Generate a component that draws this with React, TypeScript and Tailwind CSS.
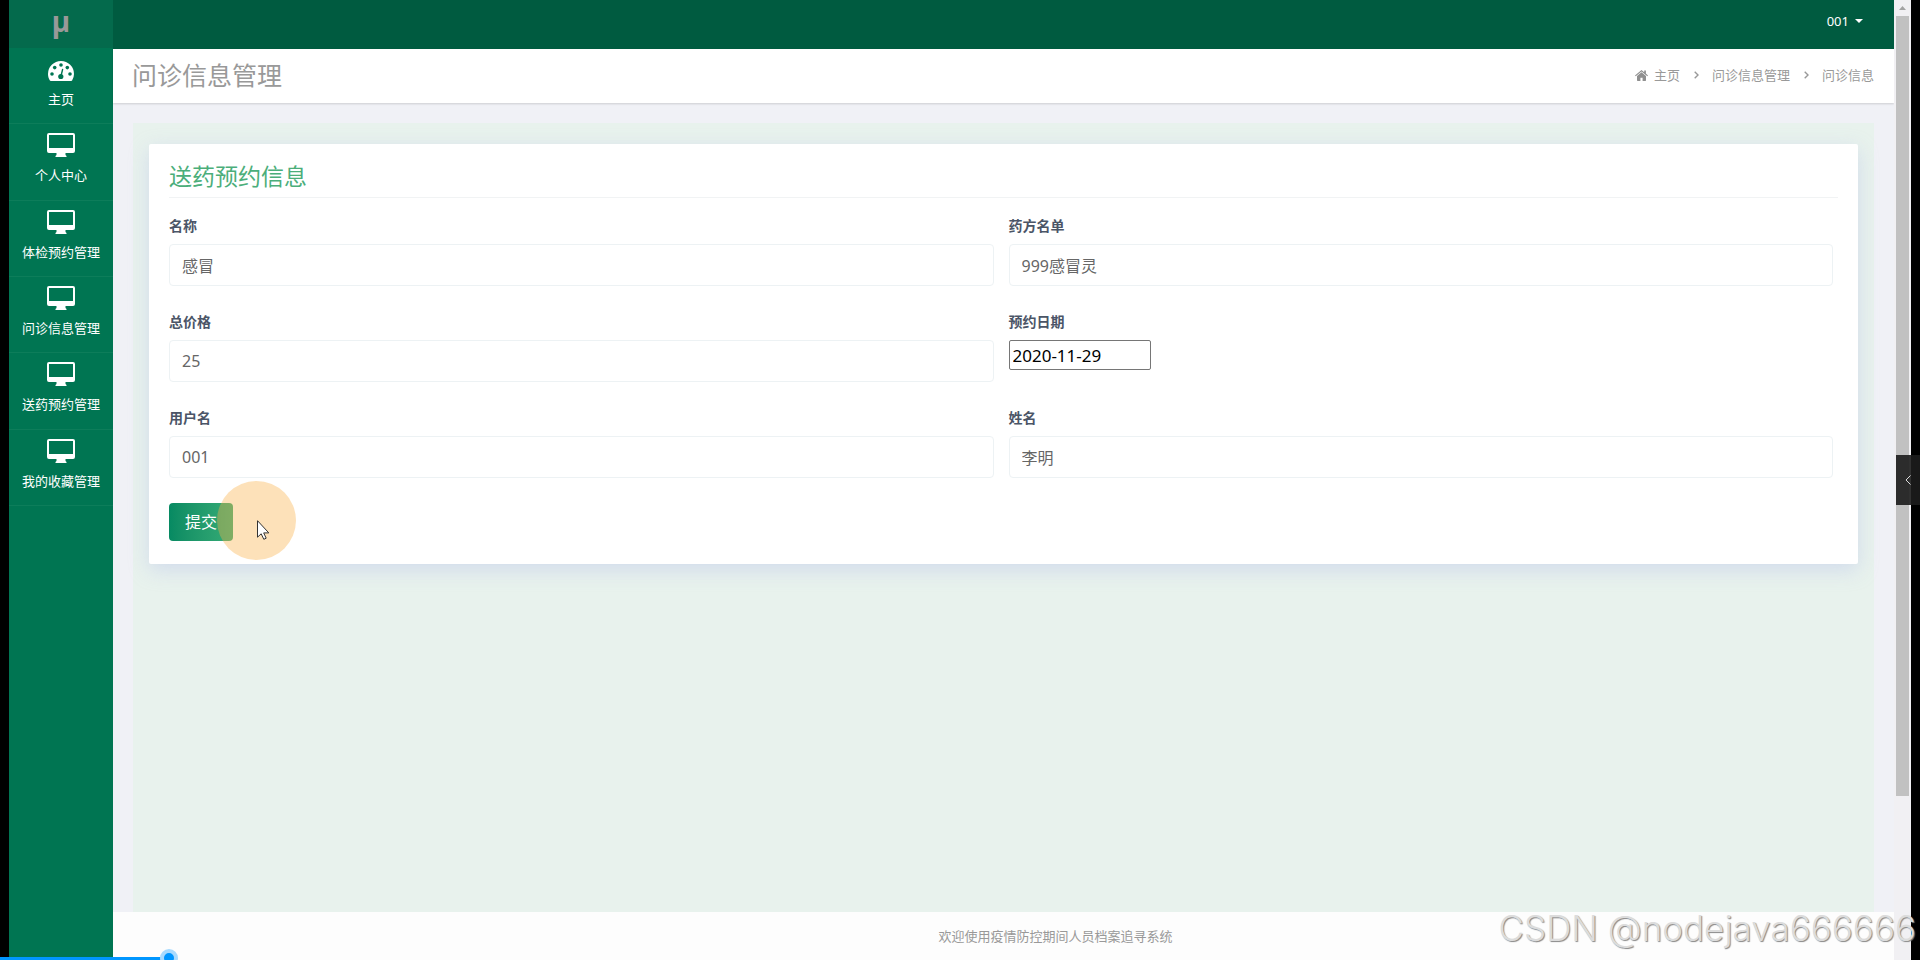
import React from "react";

const menu = ["个人中心", "体检预约管理", "问诊信息管理", "送药预约管理", "我的收藏管理"];

function DashboardIcon() {
  return (
    <svg viewBox="0 0 26 20" className="h-5 w-[26px]" aria-hidden="true">
      <path fill="#fff" d="M13 0A13 13 0 0 0 0 13c0 2.500.7 4.800 1.900 6.500.2.300.5.500.9.500h20.400c.4 0 .7-.2.9-.5A12 12 0 0 0 26 13 13 13 0 0 0 13 0z" />
      <g fill="#007552">
        <circle cx="4" cy="13" r="1.800" />
        <circle cx="6.700" cy="6.600" r="1.800" />
        <circle cx="13" cy="4" r="1.800" />
        <circle cx="19.300" cy="6.600" r="1.800" />
        <circle cx="22" cy="13" r="1.800" />
        <circle cx="12.800" cy="15.500" r="2.600" />
      </g>
      <path d="M13 15l1.600-6.500" stroke="#007552" strokeWidth="1.400" strokeLinecap="round" />
    </svg>
  );
}

function DesktopIcon() {
  return (
    <svg viewBox="0 0 28 24" className="h-6 w-7" aria-hidden="true">
      <path
        fill="#fff"
        fillRule="evenodd"
        d="M2 0h24a2 2 0 0 1 2 2v16a2 2 0 0 1-2 2h-7.500v2l1 1v1h-11v-1l1-1v-2H2a2 2 0 0 1-2-2V2a2 2 0 0 1 2-2zM2 2v13h24V2z"
      />
    </svg>
  );
}

function HomeIcon() {
  return (
    <svg viewBox="0 0 13 11" className="h-[11px] w-[13px]" fill="#8f8f8f" aria-hidden="true">
      <path d="M6.500 2.300L2 6v4.300c0 .4.200.7.600.7h2.800V7.700h2.200V11h2.800c.4 0 .6-.3.600-.7V6z" />
      <path d="M6.500 0L0 5.400l.7.8 5.800-4.800 5.800 4.800.7-.8-2.100-1.800V.6H9.200v1.600z" />
    </svg>
  );
}

function Chevron() {
  return (
    <svg viewBox="0 0 5 8" className="h-2 w-[5px]" fill="none" stroke="#999" strokeWidth="1.400" aria-hidden="true">
      <path d="M.7.7L4 4 .7 7.300" />
    </svg>
  );
}

function Field({ id, label, value }: { id: string; label: string; value: string }) {
  return (
    <div className="h-24">
      <label htmlFor={id} className="block h-[26px] text-[14px] leading-4 font-bold text-[#4b5567]">
        {label}
      </label>
      <input
        id={id}
        defaultValue={value}
        className="block h-[42px] w-full rounded-[4px] border border-[#edf2f4] bg-white px-3 text-[16px] text-[#666]"
      />
    </div>
  );
}

export default function App() {
  return (
    <div className="relative flex min-h-screen overflow-hidden bg-black px-[9px] font-['Noto_Sans','Noto_Sans_CJK_SC',sans-serif]">
      <aside className="w-[104px] shrink-0 bg-[#007552]">
        <a href="#top" className="flex h-12 items-center justify-center bg-[#046a4c] pb-[6px] text-[28px] leading-7 font-bold text-[#999]">
          µ
        </a>
        <nav className="grid min-h-[458px] grid-rows-6 text-[13px] leading-4 text-white">
          <a href="#home" className="flex flex-col items-center gap-[10px] border-b border-[#0d7d5a] pt-[13px]">
            <DashboardIcon />
            主页
          </a>
          {menu.map((item) => (
            <a key={item} href="#menu" className="flex flex-col items-center gap-[10px] border-b border-[#0d7d5a] pt-[9px] whitespace-nowrap">
              <DesktopIcon />
              {item}
            </a>
          ))}
        </nav>
      </aside>

      <div className="flex min-w-0 flex-1 flex-col bg-[#f0f1f6]">
        <header className="flex h-[49px] items-center justify-end bg-[#005b40] pr-[31px] pb-[7px]">
          <button className="flex items-center gap-[6px] text-[13px] leading-4 text-white">
            001
            <svg viewBox="0 0 8 4" className="h-1 w-2" fill="#fff" aria-hidden="true">
              <path d="M0 0h8L4 4z" />
            </svg>
          </button>
        </header>
        <div className="flex h-[54px] items-center justify-between bg-white pr-5 pb-[2px] pl-[19px] shadow-[0_1px_2px_rgba(0,0,0,0.15)]">
          <h1 className="text-[25px] leading-8 font-normal text-[#999]">问诊信息管理</h1>
          <nav className="flex items-center text-[13px] leading-4 text-[#999]">
            <a href="#home" className="flex items-center gap-[6px]">
              <HomeIcon />
              主页
            </a>
            <span className="pr-[13px] pl-[14px]"><Chevron /></span>
            <a href="#list">问诊信息管理</a>
            <span className="pr-[13px] pl-[14px]"><Chevron /></span>
            <span>问诊信息</span>
          </nav>
        </div>
        <main className="mx-5 mt-5 flex-1 bg-[#e8f2ed] px-4 pt-[21px]">
          <section className="rounded-[2px] bg-white px-5 pt-4 pb-[23px] shadow-[0_6px_20px_rgba(200,210,235,0.7)]">
            <h2 className="border-b border-[#f1f3f4] pb-[5px] text-[23px] leading-8 font-normal text-[#4bae7a]">送药预约信息</h2>
            <form onSubmit={(e) => e.preventDefault()}>
              <div className="grid grid-cols-2 gap-x-[15px] pt-5 pr-[5px]">
                <Field id="name" label="名称" value="感冒" />
                <Field id="recipe" label="药方名单" value="999感冒灵" />
                <Field id="price" label="总价格" value="25" />
                <div>
                  <label htmlFor="date" className="block h-[26px] text-[14px] leading-4 font-bold text-[#4b5567]">
                    预约日期
                  </label>
                  <input
                    id="date"
                    defaultValue="2020-11-29"
                    className="block h-[30px] w-[142px] rounded-[2px] border border-[#767676] bg-white px-[3px] text-[17px] text-black"
                  />
                </div>
                <Field id="user" label="用户名" value="001" />
                <Field id="realname" label="姓名" value="李明" />
              </div>
              <button type="submit" className="mt-[-3px] block h-[38px] w-16 rounded-[4px] bg-linear-to-r from-[#068a62] to-[#35ac76] text-[16px] leading-6 text-white">
                提交
              </button>
            </form>
          </section>
        </main>
        <footer className="flex h-12 items-center justify-center bg-[#fdfdfd] pl-[104px] text-[13px] leading-4 text-[#999]">
          欢迎使用疫情防控期间人员档案追寻系统
        </footer>
      </div>

      <div className="flex w-[17px] shrink-0 flex-col items-center bg-[#f1f0f3]">
        <svg viewBox="0 0 17 16" className="h-4 w-[17px] shrink-0" fill="#a3a3a3" aria-hidden="true">
          <path d="M5 10h7L8.500 6z" />
        </svg>
        <div className="h-[780px] w-[13px] bg-[#c1c1c1]" />
      </div>

      <button aria-label="展开" className="absolute top-[455px] right-0 flex h-[50px] w-6 items-center justify-center bg-[#1c1c1c]/90">
        <svg viewBox="0 0 6 10" className="h-[10px] w-[6px]" fill="none" stroke="#ddd" aria-hidden="true">
          <path d="M5.500.5L1 5l4.500 4.500" />
        </svg>
      </button>
      <div className="pointer-events-none absolute top-[481px] left-[217px] h-[79px] w-[79px] rounded-full bg-[#f9b146]/38" />
      <svg viewBox="0 0 13 20" className="pointer-events-none absolute top-[520px] left-[257px] h-5 w-[13px]" aria-hidden="true">
        <path d="M.5.700v16.500l3.700-3.400 2.600 5.500 2.400-1.100-2.500-5.300h5.100z" fill="#fff" stroke="#333" />
      </svg>
      <div className="pointer-events-none absolute right-[4px] bottom-3 text-[35px] leading-10 font-light whitespace-nowrap text-[#dcdcdc] [font-family:Inter,sans-serif] [text-shadow:1px_1px_1px_#888]">
        CSDN @nodejava666666
      </div>
      <div className="absolute bottom-0 left-0 h-[3px] w-[169px] bg-[#0096ff]" />
      <div className="absolute bottom-[-7px] left-[160px] h-[18px] w-[18px] rounded-full border-4 border-[#a8dafe] bg-[#0096ff]" />
    </div>
  );
}
